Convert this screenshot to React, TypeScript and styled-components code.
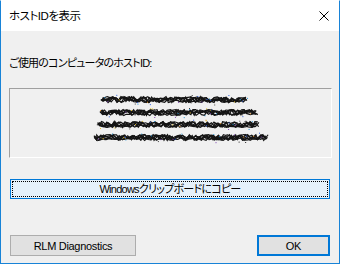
import styled, { createGlobalStyle } from "styled-components";

const GlobalStyle = createGlobalStyle`
  * { box-sizing: border-box; }
  body {
    margin: 0;
    background: #ffffff;
    font-family: "Liberation Sans", "Noto Sans CJK JP", sans-serif;
    font-size: 11px;
    font-feature-settings: "palt";
    color: #000;
  }
`;

// pseudo random so the scribble is the same every time
function rand(seed: number) {
  let s = seed;
  return () => {
    s = (s * 16807) % 2147483647;
    return (s - 1) / 2147483646;
  };
}

const rows = [
  { y: 8.5, x1: 91, x2: 238 },
  { y: 21.5, x1: 90, x2: 249 },
  { y: 33.5, x1: 87, x2: 250 },
  { y: 46.5, x1: 84, x2: 259 },
];

function Scribble() {
  const r = rand(42);
  const lines: string[] = [];
  const specks: { x: number; y: number; c: string }[] = [];
  const colors = ["#2a5bd7", "#e08a1e", "#e6c229", "#7a3fb0", "#1f8fd0", "#222", "#444"];
  rows.forEach((row) => {
    for (let k = 0; k < 6; k++) {
      let d = `M${row.x1 + r() * 4} ${row.y + (r() - 0.5) * 4}`;
      for (let x = row.x1 + 3; x < row.x2; x += 1.5 + r() * 3) {
        d += ` L${x.toFixed(1)} ${(row.y + (r() - 0.5) * 6).toFixed(1)}`;
      }
      lines.push(d);
    }
    for (let i = 0; i < 30; i++) {
      specks.push({
        x: row.x1 + r() * (row.x2 - row.x1),
        y: row.y - 5 + r() * 10,
        c: colors[Math.floor(r() * colors.length)],
      });
    }
  });
  return (
    <svg width="322" height="56" viewBox="0 0 322 56">
      {lines.map((d, i) => (
        <path key={i} d={d} fill="none" stroke="#141414" strokeWidth="1.2" />
      ))}
      {specks.map((s, i) => (
        <rect key={i} x={s.x} y={s.y} width="1" height="1" fill={s.c} />
      ))}
    </svg>
  );
}

export default function App() {
  return (
    <>
      <GlobalStyle />
      <Window>
        <TitleBar>
          <Title>ホストIDを表示</Title>
          <CloseButton>
            <svg width="10" height="10" viewBox="0 0 10 10">
              <path d="M0.5 0.5 L9.5 9.5 M9.5 0.5 L0.5 9.5" stroke="#000" strokeWidth="1" />
            </svg>
          </CloseButton>
        </TitleBar>
        <Body>
          <Label>ご使用のコンピュータのホストID:</Label>
          <IdBox>
            <Scribble />
          </IdBox>
          <CopyButton>
            <FocusRect>Windowsクリップボードにコピー</FocusRect>
          </CopyButton>
          <Footer>
            <Button $width={126}>RLM Diagnostics</Button>
            <Button $width={73} $default>OK</Button>
          </Footer>
        </Body>
      </Window>
    </>
  );
}

const Window = styled.div`
  width: 340px;
  height: 264px;
  border: 1px solid #1883d7;
  border-top-color: #ffffff;
  display: flex;
  flex-direction: column;
  background: #f0f0f0;
`;

const TitleBar = styled.div`
  height: 30px;
  background: #ffffff;
  display: flex;
  align-items: center;
  justify-content: space-between;
  padding: 0 10px 0 8px;
`;

const Title = styled.span`
  font-size: 11.5px;
  line-height: 16px;
  letter-spacing: -0.5px;
`;

const CloseButton = styled.div`
  width: 10px;
  height: 10px;
  display: flex;
  margin-top: -1px;
`;

const Body = styled.div`
  flex: 1;
  display: flex;
  flex-direction: column;
  padding: 0 7px 0 8px;
`;

const Label = styled.div`
  margin-top: 24px;
  line-height: 16px;
  font-size: 11px;
  letter-spacing: -0.8px;
`;

const IdBox = styled.div`
  margin-top: 17px;
  height: 70px;
  border-top: 1px solid #a0a0a0;
  border-left: 1px solid #a0a0a0;
  border-right: 1px solid #ffffff;
  border-bottom: 1px solid #ffffff;
  display: flex;
  align-items: flex-start;
  padding-top: 2px;
`;

const CopyButton = styled.div`
  margin: 21px 2px 0 1px;
  height: 20px;
  border: 1px solid #0078d7;
  background: #e5f1fb;
  padding: 1px;
  display: flex;
`;

const FocusRect = styled.div`
  flex: 1;
  border: 1px dotted #000;
  display: flex;
  align-items: center;
  justify-content: center;
  font-size: 11px;
  line-height: 14px;
  letter-spacing: -0.75px;
`;

const Footer = styled.div`
  margin: 36px 2px 0 1px;
  display: flex;
  justify-content: space-between;
`;

const Button = styled.div<{ $width: number; $default?: boolean }>`
  width: ${(p) => p.$width}px;
  height: 21px;
  background: #e1e1e1;
  border: ${(p) => (p.$default ? "2px solid #0078d7" : "1px solid #adadad")};
  display: flex;
  align-items: center;
  justify-content: center;
  font-size: 11px;
  line-height: 14px;
  letter-spacing: -0.3px;
`;
